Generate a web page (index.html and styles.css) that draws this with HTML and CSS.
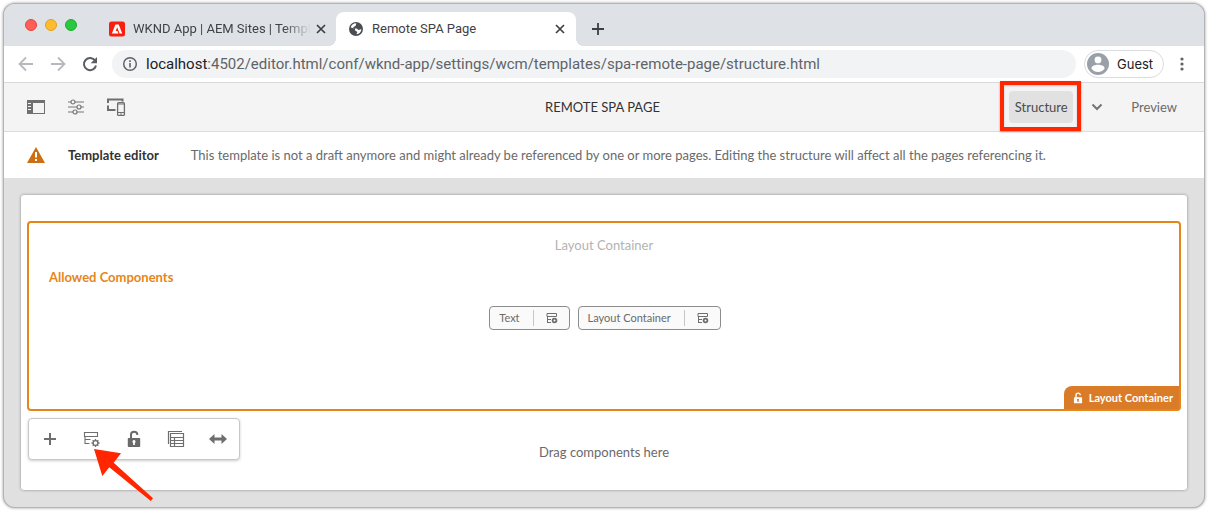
FILE: index.html
```html
<!DOCTYPE html>
<html lang="en">
<head>
<meta charset="utf-8">
<meta name="viewport" content="width=device-width, initial-scale=1">
<title>Remote SPA Page</title>
<link rel="stylesheet" href="styles.css">
</head>
<body>
<svg class="defs" aria-hidden="true">
  <symbol id="close" viewBox="0 0 10 10"><path d="M1 1l8 8M9 1L1 9" fill="none" stroke="#3c4043" stroke-width="1.7"/></symbol>
  <symbol id="policy-small" viewBox="0 0 12 12"><path d="M1 1.500h9.500v3H1zM1.500 4.500v6M1 7.500h4M1 10.500h4" fill="none" stroke="#6e6e6e"/><circle cx="8.500" cy="8.500" r="1.900" fill="none" stroke="#6e6e6e" stroke-width="1.800"/></symbol>
  <symbol id="unlock" viewBox="0 0 14 18"><path d="M4 9V4.500C4 .7 10.300.7 10.300 4.500V5" fill="none" stroke="currentColor" stroke-width="2"/><path fill="currentColor" fill-rule="evenodd" d="M1.500 8h11a.7.7 0 0 1 .7.700v7.600a.7.7 0 0 1-.7.700h-11a.7.7 0 0 1-.7-.7V8.700a.7.7 0 0 1 .7-.7zM7 10a1.600 1.600 0 0 0-.9 2.900V15h1.800v-2.100A1.600 1.600 0 0 0 7 10z"/></symbol>
</svg>
<div class="window">
  <header class="tabs">
    <div class="lights"><i class="light red"></i><i class="light yellow"></i><i class="light green"></i></div>
    <div class="tab">
      <svg width="16" height="16" viewBox="0 0 16 16"><rect width="16" height="15" y=".5" rx="2.500" fill="#fa1e0e"/><path fill="#fff" d="M6.400 3.500h3.300l3.500 9h-2.600L8.200 6.300 6.700 10h1.800l1 2.500H2.900z"/></svg>
      <span class="tab-title faded">WKND App | AEM Sites | Templ</span>
      <button class="plain" aria-label="Close tab"><svg width="10" height="10"><use href="#close"/></svg></button>
    </div>
    <div class="tab active">
      <svg width="16" height="16" viewBox="0 0 16 16"><circle cx="8" cy="8" r="7" fill="#4a4d51"/><path fill="#fff" d="M8.200 2.300c-.4 1.600.2 1.700-.8 2.600-1 .7-2 .5-2.200 1.500 0 1 1.500 1 3 1 1.500.1 1.400 1.600 2.700 1.600 1 0 1.500-.8 2.500-.6-.3 2.300-2 4.500-4.900 4.900-.3-1.300.9-1.300.7-2.400-.3-1-1.500-.6-2-1.500-.4-1 .2-1.700-.8-2C5.200 7 4.200 6.800 2.700 6.500 3.200 4 5.300 2.300 8.200 2.300z"/></svg>
      <span class="tab-title">Remote SPA Page</span>
      <button class="plain" aria-label="Close tab"><svg width="10" height="10"><use href="#close"/></svg></button>
    </div>
    <button class="plain new-tab" aria-label="New tab"><svg width="12" height="12" viewBox="0 0 12 12"><path d="M6 0v12M0 6h12" stroke="#3c4043" stroke-width="1.800"/></svg></button>
  </header>

  <nav class="address-bar">
    <button class="plain" aria-label="Back"><svg width="16" height="16" viewBox="0 0 16 16"><path d="M15 8H2M8 1.500L1.500 8 8 14.500" fill="none" stroke="#b7b9bc" stroke-width="1.800"/></svg></button>
    <button class="plain" aria-label="Forward"><svg width="16" height="16" viewBox="0 0 16 16"><path d="M1 8h13M8 1.500L14.500 8 8 14.500" fill="none" stroke="#b7b9bc" stroke-width="1.800"/></svg></button>
    <button class="plain" aria-label="Reload"><svg width="16" height="16" viewBox="0 0 16 16"><path d="M13.200 4.800A6.100 6.100 0 1 0 14 9.500" fill="none" stroke="#5a5d61" stroke-width="2"/><path d="M15 1v6.300H8.700z" fill="#5a5d61"/></svg></button>
    <div class="url">
      <svg width="16" height="16" viewBox="0 0 16 16"><circle cx="8" cy="8" r="6.300" fill="none" stroke="#5f6368" stroke-width="1.500"/><path d="M8 7v4.500M8 4.300v1.600" stroke="#5f6368" stroke-width="1.600"/></svg>
      <span><b>localhost</b>:4502/editor.html/conf/wknd-app/settings/wcm/templates/spa-remote-page/structure.html</span>
    </div>
    <button class="guest">
      <svg width="22" height="22" viewBox="0 0 22 22"><circle cx="11" cy="11" r="11" fill="#9aa0a8"/><circle cx="11" cy="6.900" r="3.400" fill="#fff"/><path fill="#fff" d="M4.500 15.200c0-2.500 3.800-3.400 6.500-3.400s6.500.9 6.500 3.400C16.300 17.700 14 19 11 19s-5.300-1.300-6.500-3.800z"/></svg>
      <span>Guest</span>
    </button>
    <button class="plain" aria-label="Menu"><svg width="4" height="14" viewBox="0 0 4 14"><g fill="#5f6368"><circle cx="2" cy="2" r="1.600"/><circle cx="2" cy="7" r="1.600"/><circle cx="2" cy="12" r="1.600"/></g></svg></button>
  </nav>

  <div class="editor-bar">
    <div class="tools">
      <button class="plain" aria-label="Side panel"><svg width="20" height="16" viewBox="0 0 20 16"><path fill="#707070" fill-rule="evenodd" d="M1 1h18v14H1zm6 3v10h11V4zM2 4v1h3V4zm0 3v1h3V7zm0 3v1h3v-1z"/></svg></button>
      <button class="plain" aria-label="Page information"><svg width="20" height="16" viewBox="0 0 20 16"><g fill="none" stroke="#777" stroke-width="1.200"><path d="M2 3h3M9 3h9M2 8h9M15 8h3M2 13h5M11 13h7"/><circle cx="7" cy="3" r="2"/><circle cx="13" cy="8" r="2"/><circle cx="9" cy="13" r="2"/></g></svg></button>
      <button class="plain" aria-label="Emulator"><svg width="20" height="18" viewBox="0 0 20 18"><path d="M2 5V1.500h14.500V3.500M2 7.500V12h7.500" fill="none" stroke="#6e6e6e" stroke-width="2"/><rect x="11.600" y="4.600" width="6.800" height="12.800" rx="1" fill="none" stroke="#6e6e6e" stroke-width="1.300"/><path d="M11.500 6h7M11.500 14.500h7" stroke="#6e6e6e" stroke-width="1.200"/><circle cx="15" cy="16" r=".8" fill="#6e6e6e"/></svg></button>
    </div>
    <h1>REMOTE SPA PAGE</h1>
    <div class="modes">
      <div class="marked"><button class="structure">Structure</button></div>
      <button class="plain" aria-label="More modes"><svg width="12" height="8" viewBox="0 0 12 8"><path d="M1.500 1.500L6 6l4.500-4.500" fill="none" stroke="#747474" stroke-width="2"/></svg></button>
      <button class="preview">Preview</button>
    </div>
  </div>

  <div class="notice">
    <svg width="18" height="16" viewBox="0 0 18 16"><path d="M9 0l9 16H0z" fill="#cb6f10"/><path d="M9 5v5.500M9 12v2" stroke="#fff" stroke-width="2"/></svg>
    <strong>Template editor</strong>
    <span>This template is not a draft anymore and might already be referenced by one or more pages. Editing the structure will affect all the pages referencing it.</span>
  </div>

  <main class="canvas">
    <div class="page">
      <section class="container">
        <p class="container-name">Layout Container</p>
        <h2>Allowed Components</h2>
        <div class="components">
          <div class="component"><span>Text</span><button class="plain" aria-label="Text policy"><svg width="12" height="12"><use href="#policy-small"/></svg></button></div>
          <div class="component"><span>Layout Container</span><button class="plain" aria-label="Layout Container policy"><svg width="12" height="12"><use href="#policy-small"/></svg></button></div>
        </div>
        <div class="badge"><svg width="10" height="12" viewBox="0 0 14 18"><use href="#unlock"/></svg>Layout Container</div>
      </section>
      <div class="drop">Drag components here</div>
      <div class="toolbar">
        <button class="plain" aria-label="Insert component"><svg width="18" height="18" viewBox="0 0 18 18"><path d="M9 3v12M3 9h12" stroke="#6e6e6e" stroke-width="2"/></svg></button>
        <button class="plain" aria-label="Policy"><svg width="18" height="18" viewBox="0 0 18 18"><path d="M1.500 2.500h13v4h-13zM2 6.500v7.500M1.500 9.500h6M1.500 13.500h5" fill="none" stroke="#6e6e6e" stroke-width="1.100"/><circle cx="12.500" cy="13" r="2.400" fill="none" stroke="#6e6e6e" stroke-width="1.300"/><path d="M12.500 9v1.500M12.500 15.500V17M8.500 13H10M15 13h1.500M9.700 10.200l1 1M14.300 14.800l1 1M9.700 15.800l1-1M14.300 11.200l1-1" stroke="#6e6e6e" stroke-width="1.300"/></svg></button>
        <button class="plain" aria-label="Unlock structure"><svg width="14" height="18"><use href="#unlock"/></svg></button>
        <button class="plain" aria-label="Select parent"><svg width="18" height="18" viewBox="0 0 18 18"><path d="M1.500 14V1.500H15M3.500 3.500h13v13h-13zM3.500 7.500h13M3.500 10.500h13M3.500 13.500h13M7.500 7.500v9" fill="none" stroke="#6e6e6e" stroke-width="1.200"/></svg></button>
        <button class="plain" aria-label="Layout"><svg width="18" height="18" viewBox="0 0 18 18"><path d="M0 9l5.500-5v3.500h7V4L18 9l-5.500 5v-3.500h-7V14z" fill="#6e6e6e"/></svg></button>
        <svg class="pointer" width="64" height="56" viewBox="92 447 64 56" aria-hidden="true"><path fill="#ff2600" d="M94 449l27 4.300-7.300 9.400L153 498.300l-2.200 2.700-41.500-33.700-7 8.700z"/></svg>
      </div>
    </div>
  </main>
</div>
</body>
</html>
```
FILE: styles.css
```css
* {
  box-sizing: border-box;
}

body {
  margin: 0;
  min-height: 100vh;
  padding: 4px;
  display: flex;
  background: #fff;
  font-family: Lato, "Open Sans", sans-serif;
  font-size: 13px;
  line-height: 20px;
  color: #6a6a6a;
}

h1, h2, p {
  margin: 0;
}

svg {
  display: block;
  flex: none;
}

button {
  font: inherit;
  color: inherit;
  cursor: pointer;
}

.defs {
  position: absolute;
  width: 0;
  height: 0;
}

.plain {
  display: flex;
  align-items: center;
  justify-content: center;
  padding: 0;
  border: 0;
  background: none;
}

.window {
  flex: 1;
  min-width: 0;
  display: flex;
  flex-direction: column;
  border-radius: 11px;
  background: #e0e0e0;
  box-shadow: 0 0 0 1px #b4b4b4, 0 0 3px 1px #999;
}

.tabs {
  height: 42px;
  flex: none;
  display: flex;
  align-items: flex-end;
  border-radius: 11px 11px 0 0;
  background: #dee1e6;
  font-family: Roboto, sans-serif;
  color: #3f4246;
}

.lights {
  width: 94px;
  align-self: center;
  display: flex;
  gap: 8px;
  padding: 0 0 0 21px;
}

.light {
  width: 12px;
  height: 12px;
  border-radius: 50%;
}

.red { background: #ff5f57; border: 1px solid #e2463f; }
.yellow { background: #febc2e; border: 1px solid #dfa023; }
.green { background: #28c840; border: 1px solid #1eab31; }

.tab {
  width: 238px;
  height: 34px;
  display: flex;
  align-items: center;
  padding: 0 10px 0 11px;
}

.tab svg + .tab-title {
  margin-left: 8px;
}

.tab-title {
  flex: 1;
  white-space: nowrap;
}

.faded {
  -webkit-mask-image: linear-gradient(90deg, #000 82%, transparent 97%);
  mask-image: linear-gradient(90deg, #000 82%, transparent 97%);
}

.active {
  position: relative;
  width: 240px;
  padding: 0 11px 0 12px;
  border-radius: 8px 8px 0 0;
  background: #fff;
}

.active::before,
.active::after {
  content: "";
  position: absolute;
  bottom: 0;
  width: 8px;
  height: 8px;
}

.active::before {
  right: 100%;
  background: radial-gradient(circle at 0 0, #dee1e6 8px, #fff 8px);
}

.active::after {
  left: 100%;
  background: radial-gradient(circle at 100% 0, #dee1e6 8px, #fff 8px);
}

.new-tab {
  height: 34px;
  margin-left: 16px;
}

.address-bar {
  height: 37px;
  flex: none;
  display: flex;
  align-items: center;
  gap: 16px;
  padding: 0 20px 0 14px;
  border-bottom: 1px solid #d9d9da;
  background: #fff;
  font-family: Roboto, sans-serif;
}

.url {
  flex: 1;
  min-width: 0;
  height: 28px;
  display: flex;
  align-items: center;
  gap: 8px;
  margin-right: -8px;
  margin-left: -2px;
  padding: 0 10px;
  border-radius: 14px;
  background: #f1f3f4;
  font-size: 15px;
  white-space: nowrap;
  overflow: hidden;
  color: #5f6368;
}

.url b {
  font-weight: 400;
  color: #202124;
}

.guest {
  width: 80px;
  height: 28px;
  display: flex;
  align-items: center;
  gap: 8px;
  padding: 0 2px;
  border: 1px solid #dadce0;
  border-radius: 14px;
  background: #fff;
  font-family: Inter, sans-serif;
  color: #202124;
}

.editor-bar {
  height: 49px;
  flex: none;
  display: grid;
  grid-template-columns: 1fr auto 1fr;
  align-items: center;
  padding: 0 27px 0 22px;
  border-bottom: 1px solid #dcdcdc;
  background: #f4f4f4;
}

.editor-bar h1 {
  padding-left: 2px;
  font-size: 13px;
  font-weight: 400;
  color: #323232;
}

.tools {
  display: flex;
  align-items: center;
  gap: 20px;
}

.modes {
  display: flex;
  align-items: center;
  justify-content: flex-end;
}

.marked {
  position: relative;
  margin-right: 18px;
}

.marked::after {
  content: "";
  position: absolute;
  inset: -10px -8px -8px -9px;
  border: 4px solid #ff2600;
  box-shadow: 0 1px 2px #0005, inset 0 1px 2px #0003;
  pointer-events: none;
}

.structure {
  width: 64px;
  height: 32px;
  padding: 0;
  border: 0;
  border-radius: 4px;
  background: #e1e1e1;
  color: #4b4b4b;
}

.preview {
  margin-left: 28px;
  padding: 0;
  border: 0;
  background: none;
}

.notice {
  min-height: 46px;
  flex: none;
  display: flex;
  align-items: center;
  padding: 0 23px;
  background: #fff;
}

.notice strong {
  margin: 0 32px 0 23px;
  color: #323232;
}

.canvas {
  flex: 1;
  display: flex;
  padding: 17px;
}

.page {
  position: relative;
  flex: 1;
  display: flex;
  flex-direction: column;
  padding: 26px 6px 0;
  border-radius: 3px;
  background: #fff;
  box-shadow: 0 0 3px #0006;
}

.container {
  position: relative;
  min-height: 190px;
  padding: 12px 20px;
  border: 2px solid #e68619;
  border-radius: 4px;
}

.container-name {
  text-align: center;
  color: #b3b3b3;
}

.container h2 {
  margin-top: 12px;
  font-size: 13px;
  line-height: 20px;
  color: #e68619;
}

.components {
  display: flex;
  justify-content: center;
  gap: 8px;
  margin-top: 19px;
  padding-left: 2px;
}

.component {
  height: 24px;
  display: flex;
  align-items: center;
  border: 1px solid #8c8c8c;
  border-radius: 4px;
  background: #fafafa;
  font-size: 11px;
}

.component span {
  padding: 0 13px 0 9px;
}

.component button {
  height: 16px;
  padding: 0 11px 0 12px;
  border-left: 1px solid #c6c6c6;
}

.badge {
  position: absolute;
  right: 0;
  bottom: 0;
  height: 23px;
  display: flex;
  align-items: center;
  gap: 6px;
  padding: 0 6px 0 9px;
  border-radius: 8px 0 0 0;
  background: #da7b27;
  font-size: 11px;
  font-weight: 700;
  color: #fff;
}

.drop {
  flex: 1;
  display: flex;
  align-items: center;
  justify-content: center;
  padding-top: 3px;
}

.toolbar {
  position: absolute;
  left: 7px;
  bottom: 30px;
  height: 42px;
  display: flex;
  align-items: center;
  gap: 24px;
  padding: 0 12px;
  border: 1px solid #c8c8c8;
  border-radius: 4px;
  background: #fff;
  box-shadow: 0 1px 3px #0003;
}

.toolbar button {
  width: 18px;
}

.pointer {
  position: absolute;
  left: 63px;
  top: 28px;
}
```
